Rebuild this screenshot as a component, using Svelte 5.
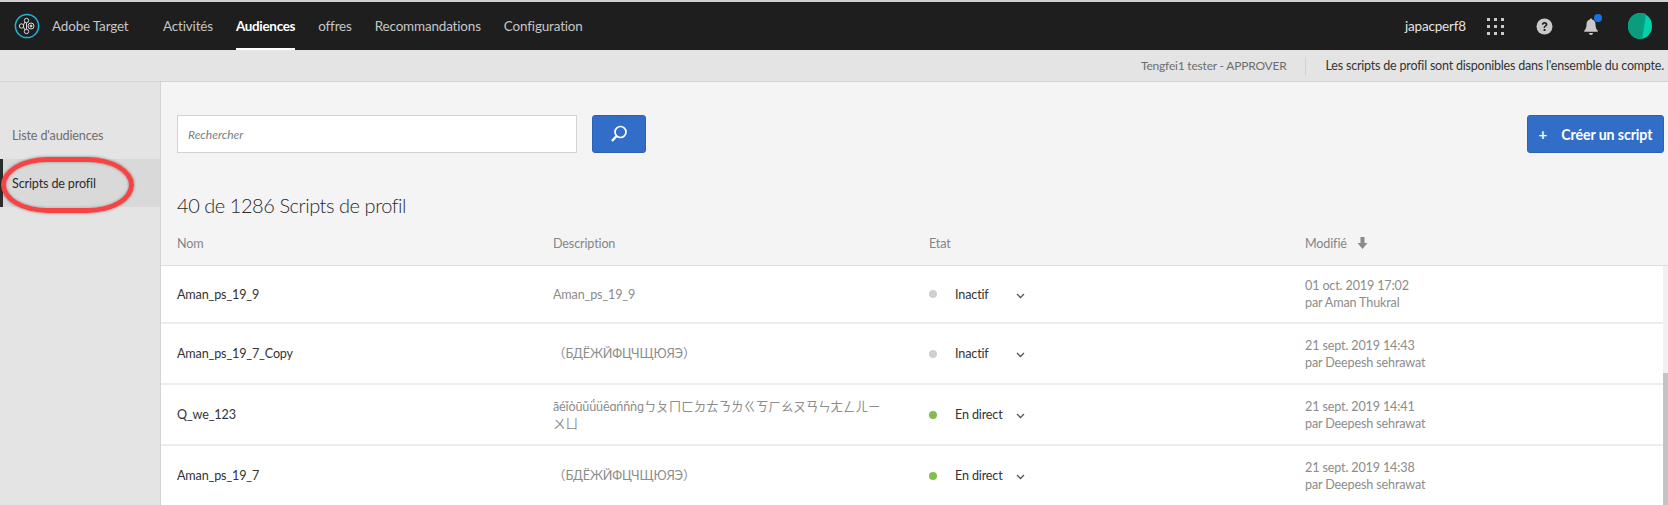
<script lang="ts">
  const nav = ['Activités', 'Audiences', 'offres', 'Recommandations', 'Configuration'];
  const cyr = '（БДЁЖЙФЦЧЩЮЯЭ）';
  const rows = [
    { name: 'Aman_ps_19_9', desc: 'Aman_ps_19_9', live: false, date: '01 oct. 2019 17:02', by: 'par Aman Thukral' },
    { name: 'Aman_ps_19_7_Copy', desc: cyr, live: false, date: '21 sept. 2019 14:43', by: 'par Deepesh sehrawat' },
    { name: 'Q_we_123', desc: 'āéǐòūǔǘüêɑńňǹɡㄅㄆㄇㄈㄉㄊㄋㄌㄍㄎㄏㄠㄡㄢㄣㄤㄥㄦㄧㄨㄩ', live: true, date: '21 sept. 2019 14:41', by: 'par Deepesh sehrawat' },
    { name: 'Aman_ps_19_7', desc: cyr, live: true, date: '21 sept. 2019 14:38', by: 'par Deepesh sehrawat' },
  ];
</script>

<div class="page">
  <header class="topbar">
    <div class="brand">
      <svg width="26" height="26" viewBox="0 0 26 26" fill="none" stroke="#d8d8d8" stroke-width="1">
        <circle cx="13" cy="13" r="11.6" stroke="#1fb6d6" stroke-width="1.5" />
        <circle cx="12.5" cy="7.5" r="2.2" />
        <circle cx="7.5" cy="13" r="2.2" />
        <circle cx="12.5" cy="18.5" r="2.2" />
        <circle cx="17" cy="13" r="3" />
        <circle cx="17" cy="13" r="1" fill="#d8d8d8" />
        <path d="M12.5 9.7v6.6M9.5 12l1.5-3M9.5 14l1.5 3" />
      </svg>
      <span>Adobe Target</span>
    </div>
    <nav class="nav">
      {#each nav as item}
        <a href="#top" class:active={item === 'Audiences'}>{item}</a>
      {/each}
    </nav>
    <div class="user">
      <span class="user-name">japacperf8</span>
      <svg class="apps" width="17" height="17" viewBox="0 0 17 17" fill="#c9c9c9">
        {#each [0, 7, 14] as y}
          {#each [0, 7, 14] as x}
            <rect {x} {y} width="3" height="3" />
          {/each}
        {/each}
      </svg>
      <svg class="help" width="17" height="17" viewBox="0 0 17 17">
        <circle cx="8.5" cy="8.5" r="8" fill="#c9c9c9" />
        <path d="M5.8 6.6c0-1.6 1.2-2.5 2.8-2.5s2.8.9 2.8 2.3c0 1.2-.7 1.7-1.5 2.2-.6.4-.8.6-.8 1.3H7.6c0-1.2.4-1.7 1.2-2.2.6-.4.9-.7.9-1.1 0-.5-.5-.8-1.1-.8-.7 0-1.1.4-1.1 1z" fill="#1e1e1e" />
        <rect x="7.6" y="11" width="1.9" height="1.9" fill="#1e1e1e" />
      </svg>
      <span class="bell">
        <svg width="16" height="19" viewBox="0 0 16 19" fill="#c9c9c9">
          <path d="M8 1.5c.7 0 1.1.5 1.1 1.1 2.3.6 3.4 2.4 3.4 4.9 0 3 .7 4.6 2.2 6v1.2H1.3v-1.2c1.5-1.4 2.2-3 2.2-6 0-2.5 1.1-4.3 3.4-4.9 0-.6.4-1.1 1.1-1.1z" />
          <path d="M6 16h4c0 1.2-.9 2-2 2s-2-.8-2-2z" />
        </svg>
        <i class="bell-dot"></i>
      </span>
      <svg class="avatar" width="24" height="26" viewBox="0 0 24 26">
        <ellipse cx="12" cy="13" rx="12" ry="13" fill="#00d3a8" />
        <path d="M12 0C5.4 0 0 5.8 0 13s5.4 13 12 13c1 0 1.4-.1 2.2-.3L18 .9C16.500.3 14 0 12 0z" fill="#0a9c7e" />
      </svg>
    </div>
  </header>

  <div class="subbar">
    <span class="role">Tengfei1 tester - APPROVER</span>
    <span class="notice">Les scripts de profil sont disponibles dans l'ensemble du compte.</span>
  </div>

  <div class="body">
    <aside class="side">
      <a href="#top" class="side-link">Liste d'audiences</a>
      <a href="#top" class="side-link current">Scripts de profil</a>
      <i class="oval"></i>
    </aside>

    <main class="main">
      <div class="tools">
        <div class="search">Rechercher</div>
        <button class="btn search-btn" type="button" aria-label="Rechercher">
          <svg width="20" height="20" viewBox="0 0 20 20" fill="none" stroke="#fff">
            <circle cx="11.500" cy="8" r="5.500" stroke-width="1.700" />
            <path d="M7.500 12l-4.500 5" stroke-width="2.400" />
          </svg>
        </button>
        <button class="btn create" type="button"><span class="plus">+</span>Créer un script</button>
      </div>

      <h1 class="count">40 de 1286 Scripts de profil</h1>

      <div class="table">
        <div class="row head">
          <span>Nom</span>
          <span>Description</span>
          <span>Etat</span>
          <span class="mod">Modifié
            <svg width="11" height="12" viewBox="0 0 11 12" fill="#8a8a8a"><path d="M3.500 0h4v6h3L5.500 12 .5 6h3z" /></svg>
          </span>
        </div>
        <div class="rows">
          {#each rows as r}
            <div class="row item">
              <span class="name">{r.name}</span>
              <span class="desc">{r.desc}</span>
              <span class="state">
                <i class="dot" class:live={r.live}></i>
                <span class="state-text">{r.live ? 'En direct' : 'Inactif'}</span>
                <svg class="chev" width="9" height="6" viewBox="0 0 9 6" fill="none" stroke="#555" stroke-width="1.300"><path d="M1 1l3.500 3.500L8 1" /></svg>
              </span>
              <span class="meta">{r.date}<br />{r.by}</span>
            </div>
          {/each}
          <div class="scroll"><i></i></div>
        </div>
      </div>
    </main>
  </div>
</div>

<style>
  :global(body) {
    margin: 0;
    background: #fff;
    font-family: Lato, "Noto Sans", "Noto Sans CJK SC", sans-serif;
  }

  .page {
    height: 505px;
    overflow: hidden;
    display: flex;
    flex-direction: column;
    font-size: 12.6px;
    letter-spacing: -0.15px;
    color: #4b4b4b;
  }

  a {
    text-decoration: none;
    color: inherit;
  }

  .topbar {
    height: 48px;
    margin-top: 2px;
    box-shadow: 0 -2px 0 #cfcfcf;
    background: #1e1e1e;
    display: flex;
    align-items: stretch;
    padding-left: 14px;
    color: #c6c6c6;
    font-size: 13.45px;
    flex: none;
  }

  .brand {
    display: flex;
    align-items: center;
    gap: 12px;
    width: 149px;
  }

  .nav {
    display: flex;
    gap: 23px;
  }

  .nav a {
    display: flex;
    align-items: center;
    border-bottom: 2px solid transparent;
    padding-top: 2px;
  }

  .nav a.active {
    color: #fff;
    font-weight: 700;
    letter-spacing: -0.3px;
    border-bottom-color: #fff;
  }

  .user {
    margin-left: auto;
    display: flex;
    align-items: center;
    padding-right: 16px;
  }

  .user-name {
    color: #e4e4e4;
    margin-right: 21px;
  }

  .apps {
    margin-right: 32px;
  }

  .help {
    margin-right: 30px;
  }

  .bell {
    position: relative;
    display: flex;
    margin-right: 29px;
  }

  .bell-dot {
    position: absolute;
    right: -3px;
    top: -3px;
    width: 8px;
    height: 8px;
    border-radius: 50%;
    background: #1473e6;
  }

  .subbar {
    height: 32px;
    flex: none;
    background: #e4e4e4;
    border-bottom: 1px solid #d3d3d3;
    box-sizing: border-box;
    display: flex;
    justify-content: flex-end;
    align-items: center;
    padding-right: 4px;
    font-size: 12.5px;
    letter-spacing: -0.2px;
  }

  .role {
    color: #6e6e6e;
    font-size: 12px;
    padding-right: 18px;
    margin-right: 20px;
    border-right: 1px solid #d0d0d0;
    line-height: 18px;
  }

  .notice {
    color: #333;
  }

  .body {
    flex: 1;
    display: flex;
    min-height: 0;
  }

  .side {
    position: relative;
    width: 160px;
    flex: none;
    background: #e4e4e4;
    border-right: 1px solid #d3d3d3;
    padding-top: 30px;
  }

  .side-link {
    display: flex;
    align-items: center;
    height: 47px;
    padding-left: 12px;
    color: #6e6e6e;
  }

  .side-link.current {
    height: 48px;
    padding-left: 9px;
    background: #d9d9d9;
    border-left: 3px solid #2c2c2c;
    color: #2c2c2c;
  }

  .oval {
    position: absolute;
    left: 1px;
    top: 75px;
    width: 123px;
    height: 46px;
    border: 5px solid #f44444;
    border-radius: 46px / 28px;
    box-shadow: 0 0 3px rgba(0, 0, 0, 0.45), inset 0 0 3px rgba(0, 0, 0, 0.35);
  }

  .main {
    flex: 1;
    min-width: 0;
    background: #f4f4f4;
    display: flex;
    flex-direction: column;
  }

  .tools {
    display: flex;
    flex: none;
    gap: 15px;
    padding: 33px 4px 0 16px;
  }

  .search {
    height: 36px;
    width: 388px;
    border: 1px solid #d3d3d3;
    background: #fff;
    display: flex;
    align-items: center;
    padding-left: 10px;
    font-style: italic;
    font-size: 12px;
    letter-spacing: 0;
    color: #7e7e7e;
  }

  .btn {
    height: 38px;
    border: 1px solid #2a62b8;
    border-radius: 3px;
    background: #326ec8;
    color: #fff;
    font-family: inherit;
    padding: 0;
  }

  .search-btn {
    width: 54px;
    display: flex;
    align-items: center;
    justify-content: center;
  }

  .create {
    margin-left: auto;
    width: 137px;
    font-weight: 700;
    font-size: 14.2px;
    letter-spacing: -0.1px;
  }

  .plus {
    margin-right: 14px;
    font-size: 15px;
  }

  .count {
    flex: none;
    margin: 0;
    padding: 38px 0 0 16px;
    height: 28px;
    font-weight: 300;
    font-size: 20px;
    line-height: 28px;
    letter-spacing: -0.45px;
    color: #2a2a2a;
  }

  .table {
    flex: 1;
    display: flex;
    flex-direction: column;
    min-height: 0;
  }

  .row {
    display: grid;
    grid-template-columns: 376px 376px 376px 1fr;
    padding-left: 16px;
    align-items: center;
  }

  .head {
    flex: none;
    height: 44px;
    padding-top: 2px;
    border-bottom: 1px solid #dedede;
    color: #858585;
  }

  .mod {
    display: flex;
    align-items: center;
    gap: 10px;
  }

  .rows {
    position: relative;
    flex: 1;
    min-height: 0;
    overflow: hidden;
    background: #fff;
  }

  .item {
    border-bottom: 2px solid #ededed;
    height: 59px;
  }

  .item:first-child {
    height: 56px;
  }

  .name {
    color: #333;
  }

  .desc {
    color: #8c8c8c;
    padding-right: 42px;
    line-height: 17px;
  }

  .state {
    display: flex;
    align-items: center;
    color: #333;
  }

  .dot {
    width: 8px;
    height: 8px;
    border-radius: 50%;
    background: #cfcfcf;
    margin-right: 18px;
  }

  .dot.live {
    background: #84bd4f;
  }

  .state-text {
    width: 61px;
  }

  .chev {
    margin-top: 3px;
  }

  .meta {
    color: #8c8c8c;
    line-height: 17px;
  }

  .scroll {
    position: absolute;
    right: 0;
    top: 0;
    bottom: 0;
    width: 5px;
    background: #f1f1f1;
  }

  .scroll i {
    position: absolute;
    left: 0;
    right: 0;
    top: 107px;
    bottom: 0;
    background: #c4c4c4;
  }
</style>
